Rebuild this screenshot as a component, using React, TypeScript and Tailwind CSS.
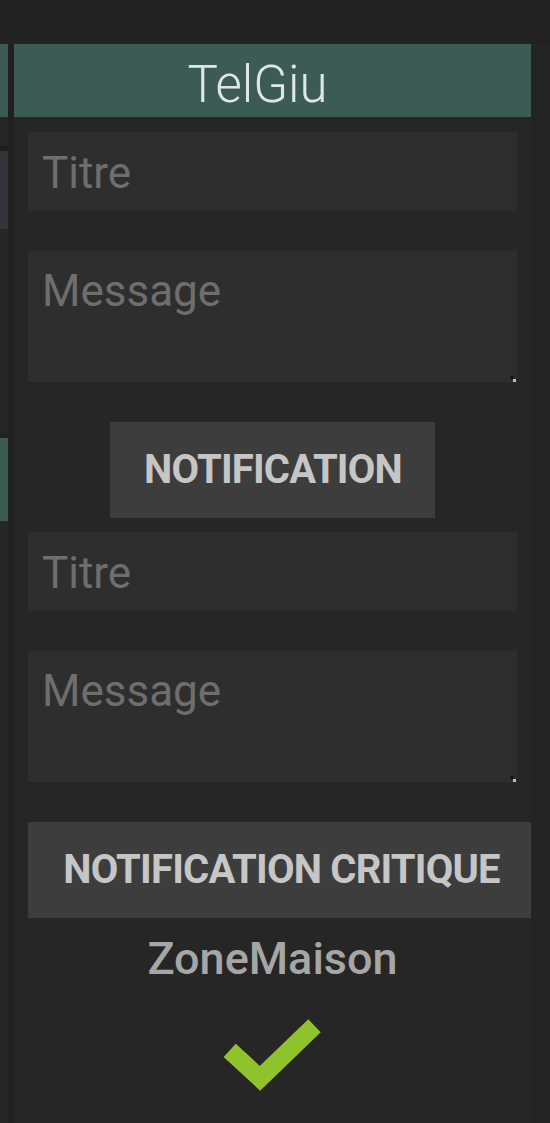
import React from "react";

const font = { fontFamily: "Roboto, 'Noto Sans', sans-serif" };

function Resizer() {
  return (
    <svg
      className="absolute right-[1px] bottom-[0px]"
      width="6"
      height="7"
      viewBox="0 0 6 7"
    >
      <path d="M2 0.5 L4 2.5 L2 4.5 L0 2.5 Z" fill="#111" />
      <rect x="3" y="4" width="3" height="3" fill="#bdbdbd" />
    </svg>
  );
}

function Group({ button, wide }: { button: string; wide?: boolean }) {
  return (
    <>
      <input
        placeholder="Titre"
        className="block w-full h-[79px] shrink-0 bg-[#2e2e2e] px-[14px] pt-[3px] text-[44px] leading-[52px] text-[#d0d0d0] placeholder:text-[#6e6e6e] outline-none"
        style={font}
      />
      <div className="relative mt-[40px] h-[131px] shrink-0">
        <textarea
          placeholder="Message"
          className="block w-full h-full resize-none bg-[#2e2e2e] px-[14px] pt-[14px] text-[44px] leading-[52px] text-[#d0d0d0] placeholder:text-[#6e6e6e] outline-none"
          style={font}
        />
        <Resizer />
      </div>
      <button
        className={
          wide
            ? "mt-[40px] h-[96px] w-[503px] shrink-0 self-start bg-[#3d3d3d] text-[40px] font-bold tracking-[-0.8px] text-[#c6c6c6] whitespace-nowrap flex items-center justify-center"
            : "mt-[40px] h-[96px] w-[325px] shrink-0 self-center bg-[#3d3d3d] text-[40px] font-bold tracking-[-0.8px] text-[#c6c6c6] whitespace-nowrap flex items-center justify-center"
        }
        style={font}
      >
        <span className={wide ? "pl-[4px]" : "pl-[1px]"}>{button}</span>
      </button>
    </>
  );
}

export default function App() {
  return (
    <div
      className="w-[550px] h-[1123px] overflow-hidden bg-[#222222] flex flex-col"
      style={font}
    >
      <div className="h-[44px] shrink-0" />
      <div className="flex flex-1 min-h-0">
        {/* left neighbouring column */}
        <div className="w-[8px] shrink-0 flex flex-col bg-[#262626]">
          <div className="h-[73px] bg-[#3d5b55]" />
          <div className="h-[29px]" />
          <div className="h-[5px] bg-[#1d1d1e]" />
          <div className="h-[78px] bg-[#34353a]" />
          <div className="h-[204px]" />
          <div className="h-[5px] bg-[#222222]" />
          <div className="h-[83px] bg-[#3d5b55]" />
        </div>
        <div className="w-[6px] shrink-0 bg-[#202020]" />
        {/* main panel */}
        <div className="w-[517px] shrink-0 bg-[#262626] flex flex-col">
          <div className="h-[73px] shrink-0 bg-[#3d5b55] flex justify-center pr-[30px] pt-[12px]">
            <span className="text-[51px] leading-[58px] font-light text-[#dfe7e5]">
              TelGiu
            </span>
          </div>
          <div className="flex flex-col px-[14px] pt-[15px]">
            <Group button="NOTIFICATION" />
            <div className="h-[14px] shrink-0" />
            <Group button="NOTIFICATION CRITIQUE" wide />
            <div className="mt-[14px] flex justify-center">
              <span className="text-[45px] leading-[54px] font-medium text-[#a6a6a6]">
                ZoneMaison
              </span>
            </div>
            <div className="mt-[26px] flex justify-center">
              <svg width="115" height="86" viewBox="0 0 115 86">
                <path
                  d="M14.7 38.3 L45 66.3 L99.5 13.8"
                  fill="none"
                  stroke="#8fc22b"
                  strokeWidth="18"
                  strokeLinejoin="miter"
                  strokeLinecap="butt"
                />
              </svg>
            </div>
          </div>
        </div>
        <div className="flex-1 bg-[#242424]" />
      </div>
    </div>
  );
}
